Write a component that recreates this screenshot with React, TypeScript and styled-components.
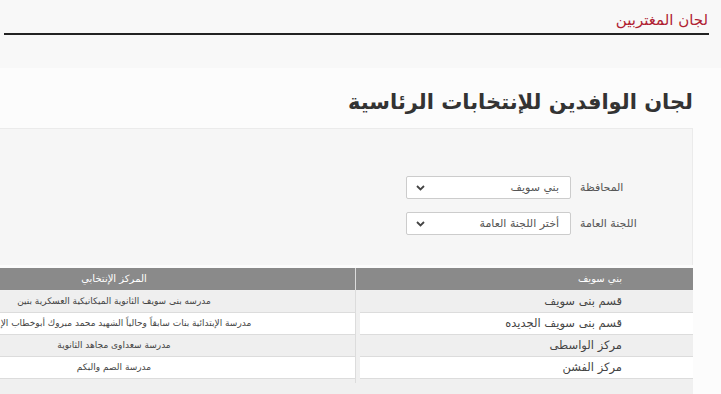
import styled, { createGlobalStyle } from 'styled-components'

const GlobalStyle = createGlobalStyle`
  html, body {
    margin: 0;
    padding: 0;
    background: #fcfcfc;
    direction: rtl;
    overflow: hidden;
    font-family: "DejaVu Sans", "Noto Sans", sans-serif;
  }
`

const governorateRows = ['قسم بنى سويف', 'قسم بنى سويف الجديده', 'مركز الواسطى', 'مركز الفشن']

const centerRows = [
  'مدرسه بنى سويف الثانوية الميكانيكية العسكرية بنين',
  'مدرسة الإبتدائية بنات سابقاً وحالياً الشهيد محمد مبروك أبوخطاب الإعدادية',
  'مدرسة سعداوى مجاهد الثانوية',
  'مدرسة الصم والبكم',
]

function Chevron() {
  return (
    <svg width="9" height="6" viewBox="0 0 9 6">
      <path d="M1 1l3.5 3.5L8 1" fill="none" stroke="#444" strokeWidth="1.8" />
    </svg>
  )
}

export default function App() {
  return (
    <Page>
      <GlobalStyle />
      <TopBar>
        <Brand>لجان المغتربين</Brand>
      </TopBar>
      <Content>
        <Title>لجان الوافدين للإنتخابات الرئاسية</Title>
        <FormPanel>
          <FormRow>
            <Label>المحافظة</Label>
            <Select>
              <span>بني سويف</span>
              <Chevron />
            </Select>
          </FormRow>
          <FormRow>
            <Label>اللجنة العامة</Label>
            <Select>
              <span>أختر اللجنة العامة</span>
              <Chevron />
            </Select>
          </FormRow>
        </FormPanel>
        <Tables>
          <Table $width={337}>
            <HeadCell $align="right">بني سويف</HeadCell>
            {governorateRows.map((r, i) => (
              <Row key={r} $alt={i % 2 === 0} $inset>
                <Cell $align="right">{r}</Cell>
              </Row>
            ))}
          </Table>
          <Table $width={482} $divider>
            <HeadCell $align="center">المركز الإنتخابي</HeadCell>
            {centerRows.map((r, i) => (
              <Row key={r} $alt={i % 2 === 0}>
                <Cell $align="center" $small>{r}</Cell>
              </Row>
            ))}
          </Table>
        </Tables>
      </Content>
    </Page>
  )
}

const Page = styled.div`
  width: 721px;
  height: 394px;
  overflow: hidden;
`

const TopBar = styled.header`
  height: 68px;
  box-sizing: border-box;
  padding: 8px 12px 0 4px;
  background: #f8f8f8;
`

const Brand = styled.div`
  font-size: 15px;
  line-height: 25px;
  color: #b01e33;
  border-bottom: 2px solid #222;
  padding-right: 1px;
`

const Content = styled.main`
  padding-right: 28px;
`

const Title = styled.h1`
  margin: 18px 0 10px;
  font-size: 21px;
  line-height: 32px;
  font-weight: bold;
  color: #333;
`

const FormPanel = styled.section`
  height: 137px;
  box-sizing: border-box;
  padding-top: 47px;
  background: #f6f6f6;
  border-top: 1px solid #ebebeb;
  border-right: 1px solid #ebebeb;
  display: flex;
  flex-direction: column;
  gap: 13px;
`

const FormRow = styled.div`
  display: flex;
  align-items: center;
`

const Label = styled.label`
  width: 121px;
  box-sizing: border-box;
  padding-left: 9px;
  text-align: left;
  font-size: 11px;
  color: #555;
`

const Select = styled.div`
  width: 165px;
  height: 23px;
  box-sizing: border-box;
  border: 1px solid #ccc;
  border-radius: 2px;
  background: #fff;
  display: flex;
  align-items: center;
  justify-content: space-between;
  padding: 0 11px 0 9px;
  font-size: 11px;
  color: #555;
`

const Tables = styled.section`
  margin-top: 3px;
  height: 200px;
  background: #f0f0f0;
  display: flex;
  align-items: flex-start;
`

const Table = styled.div<{ $width: number; $divider?: boolean }>`
  flex: 0 0 ${(p) => p.$width}px;
  padding-bottom: 4px;
  ${(p) => p.$divider && 'border-right: 1px solid #dcdcdc; border-left: 1px solid #dcdcdc;'}
`

const HeadCell = styled.div<{ $align: string }>`
  height: 22px;
  line-height: 22px;
  background: #8a8a8a;
  color: #fff;
  font-size: 10px;
  text-align: ${(p) => p.$align};
  padding-right: ${(p) => (p.$align === 'right' ? '71px' : '0')};
  margin-bottom: 1px;
`

const Row = styled.div<{ $alt: boolean; $inset?: boolean }>`
  height: 21px;
  background: ${(p) => (p.$alt ? '#efefef' : '#fff')};
  border-bottom: 1px solid #dcdcdc;
  margin-left: ${(p) => (p.$inset ? '4px' : '0')};
`

const Cell = styled.div<{ $align: string; $small?: boolean }>`
  line-height: 21px;
  font-size: ${(p) => (p.$small ? '9px' : '11.5px')};
  color: #444;
  white-space: nowrap;
  text-align: ${(p) => p.$align};
  padding-right: ${(p) => (p.$align === 'right' ? '71px' : '0')};
`
